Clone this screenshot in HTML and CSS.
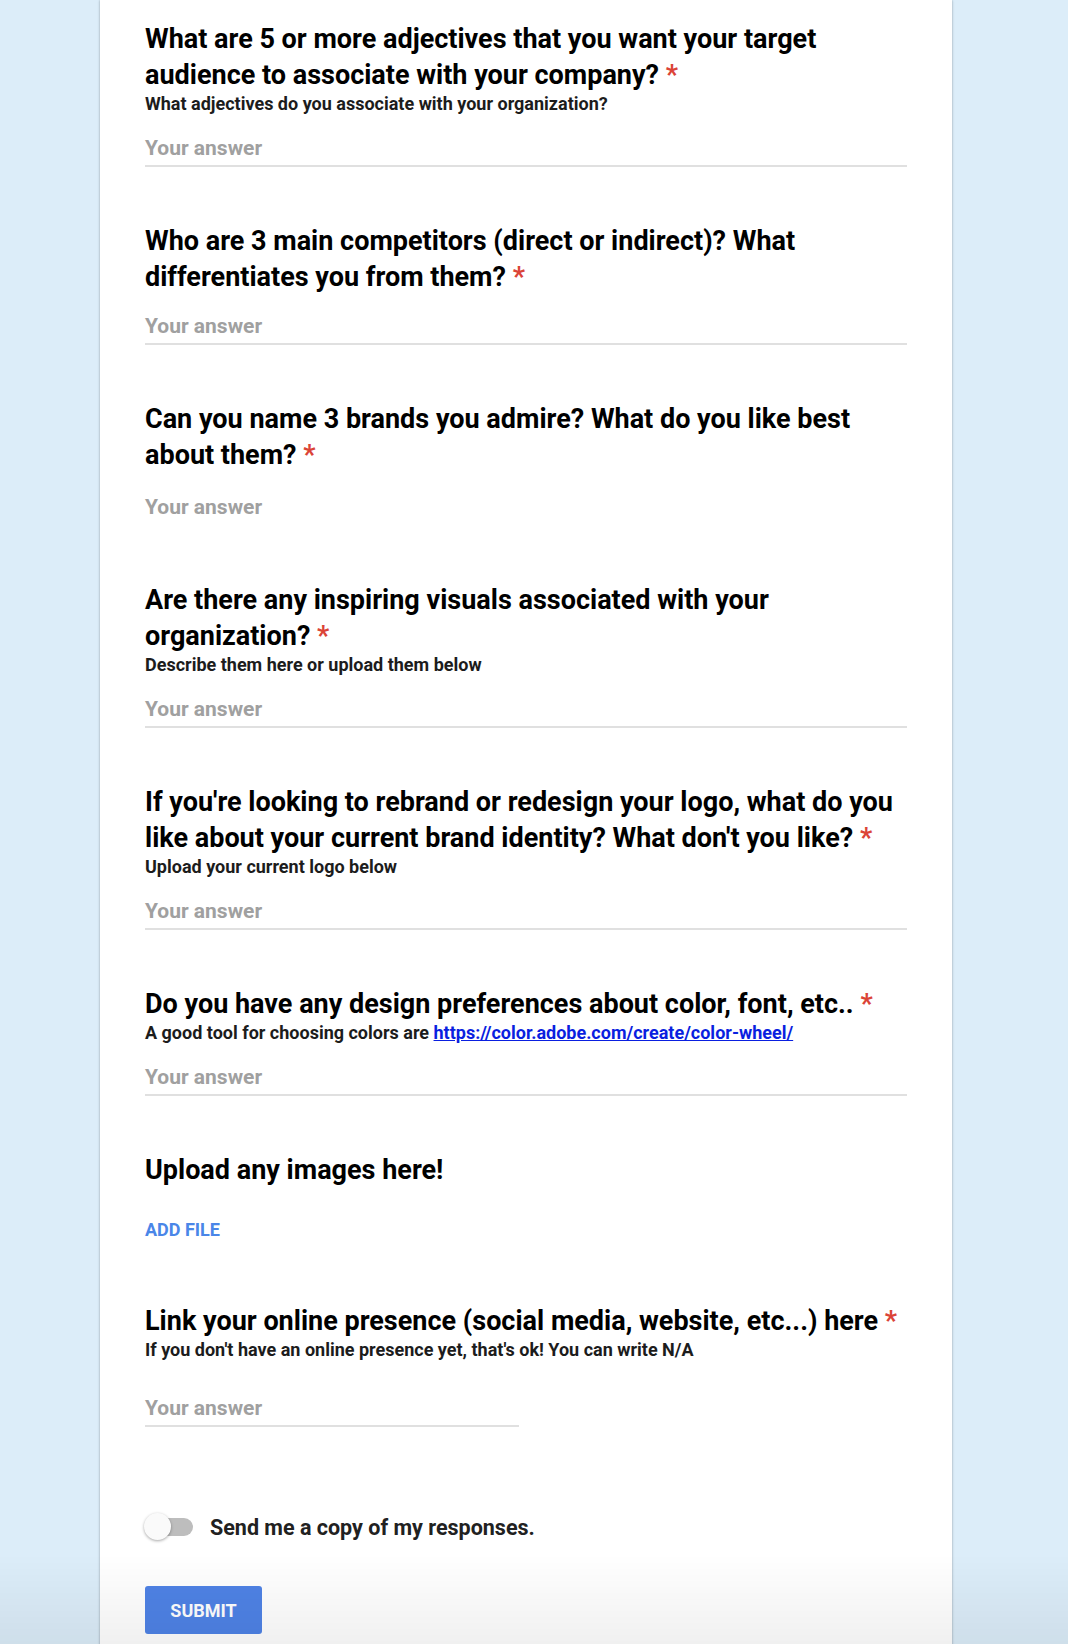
FILE: index.html
```html
<!DOCTYPE html>
<html lang="en">
<head>
<meta charset="utf-8">
<title>Form</title>
<link rel="stylesheet" href="styles.css">
</head>
<body>
<div class="page">
  <main class="card">
    <section class="question">
      <h2 class="q-title">What are 5 or more adjectives that you want your target audience to associate with your company? <span class="req">*</span></h2>
      <p class="q-desc">What adjectives do you associate with your organization?</p>
      <div class="answer">Your answer</div>
    </section>

    <section class="question">
      <h2 class="q-title">Who are 3 main competitors (direct or indirect)? What differentiates you from them? <span class="req">*</span></h2>
      <div class="answer answer-tight">Your answer</div>
    </section>

    <section class="question">
      <h2 class="q-title">Can you name 3 brands you admire? What do you like best about them? <span class="req">*</span></h2>
      <div class="answer answer-noline">Your answer</div>
    </section>

    <section class="question">
      <h2 class="q-title">Are there any inspiring visuals associated with your organization? <span class="req">*</span></h2>
      <p class="q-desc">Describe them here or upload them below</p>
      <div class="answer">Your answer</div>
    </section>

    <section class="question">
      <h2 class="q-title">If you're looking to rebrand or redesign your logo, what do you like about your current brand identity? What don't you like? <span class="req">*</span></h2>
      <p class="q-desc">Upload your current logo below</p>
      <div class="answer">Your answer</div>
    </section>

    <section class="question">
      <h2 class="q-title">Do you have any design preferences about color, font, etc.. <span class="req">*</span></h2>
      <p class="q-desc">A good tool for choosing colors are <a class="link" href="#">https://color.adobe.com/create/color-wheel/</a></p>
      <div class="answer">Your answer</div>
    </section>

    <section class="question">
      <h2 class="q-title">Upload any images here!</h2>
      <div class="add-file">ADD FILE</div>
    </section>

    <section class="question">
      <h2 class="q-title">Link your online presence (social media, website, etc...) here <span class="req">*</span></h2>
      <p class="q-desc">If you don't have an online presence yet, that's ok! You can write N/A</p>
      <div class="answer answer-short">Your answer</div>
    </section>

    <div class="copy-row">
      <span class="toggle"><span class="knob"></span></span>
      <span class="copy-label">Send me a copy of my responses.</span>
    </div>

    <div class="submit-row">
      <button class="submit" type="button">SUBMIT</button>
    </div>
  </main>
</div>
<div class="bottom-fade"></div>
</body>
</html>
```

FILE: styles.css
```css
html, body {
  margin: 0;
  padding: 0;
  background: #dcedf9;
}

body {
  font-family: Roboto, "Liberation Sans", Arial, sans-serif;
  color: #000;
  height: 1644px;
  overflow: hidden;
}

.page {
  display: flex;
  padding-left: 100px;
}

.card {
  width: 852px;
  box-sizing: border-box;
  background: #fff;
  padding: 21px 45px 60px 45px;
  box-shadow: 0 0 2px rgba(0, 0, 0, 0.28), 0 0 4px rgba(0, 0, 0, 0.08);
}

.question {
  margin-bottom: 56px;
}

.q-title {
  margin: 0;
  font-size: 27px;
  line-height: 36px;
  font-weight: 700;
  color: #000;
}

.req {
  color: #db4437;
}

.q-desc {
  margin: 0;
  font-size: 18px;
  line-height: 22px;
  font-weight: 700;
  color: #1c1c1c;
}

.link {
  color: #0a1fe0;
  text-decoration: underline;
}

.answer {
  margin-top: 20px;
  font-size: 21px;
  line-height: 26px;
  font-weight: 700;
  color: #a0a0a0;
  padding-bottom: 4px;
  border-bottom: 2px solid #e0e0e0;
}

.answer-tight {
  margin-top: 18px;
}

.answer-noline {
  margin-top: 21px;
  border-bottom-color: transparent;
}

.answer-short {
  width: 374px;
  margin-top: 34px;
}

.add-file {
  margin-top: 23px;
  height: 36px;
  display: flex;
  align-items: center;
  font-size: 18px;
  font-weight: 700;
  color: #4a86e8;
}

.copy-row {
  display: flex;
  align-items: center;
  gap: 17px;
  height: 40px;
  margin-top: 80px;
}

.toggle {
  position: relative;
  width: 48px;
  height: 18px;
  border-radius: 9px;
  background: #bdbdbd;
  flex: none;
}

.knob {
  position: absolute;
  left: -1px;
  top: -5px;
  width: 27px;
  height: 27px;
  border-radius: 50%;
  background: #fafafa;
  box-shadow: 0 1px 3px rgba(0, 0, 0, 0.35);
}

.copy-label {
  font-size: 21.5px;
  font-weight: 700;
  color: #212121;
}

.submit-row {
  margin-top: 39px;
}

.submit {
  width: 117px;
  height: 48px;
  border: none;
  border-radius: 3px;
  background: #4f83e6;
  color: #fff;
  font-family: Roboto, "Liberation Sans", Arial, sans-serif;
  font-size: 18px;
  font-weight: 700;
  padding: 0;
}

.bottom-fade {
  position: fixed;
  left: 0;
  right: 0;
  bottom: 0;
  height: 90px;
  pointer-events: none;
  background: linear-gradient(to bottom, rgba(0, 0, 0, 0), rgba(0, 0, 0, 0.06));
}
```
